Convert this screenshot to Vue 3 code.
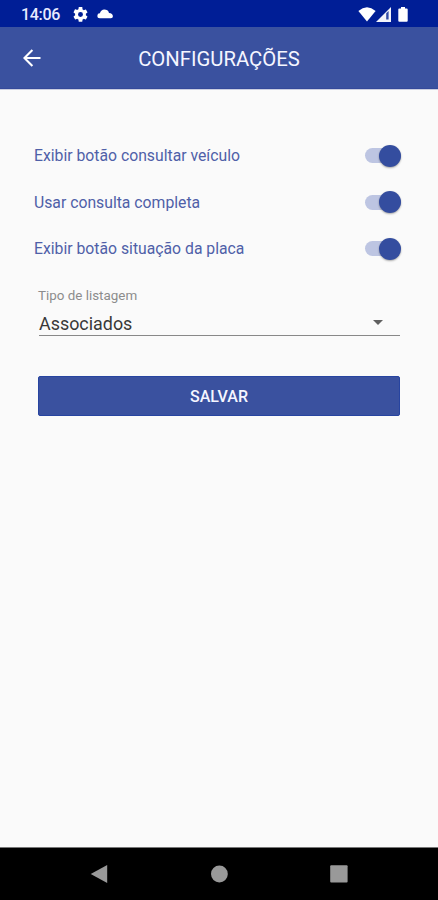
<script setup>
import { ref } from 'vue'

const options = ref([
  { label: 'Exibir botão consultar veículo', on: true },
  { label: 'Usar consulta completa', on: true },
  { label: 'Exibir botão situação da placa', on: true },
])
</script>

<template>
  <div class="screen">
    <div class="status">
      <span class="clock">14:06</span>
      <svg class="gear" viewBox="2 2 20 20"><path d="M19.14 12.94c.04-.3.06-.61.06-.94 0-.32-.02-.64-.07-.94l2.03-1.58a.49.49 0 0 0 .12-.61l-1.92-3.32a.49.49 0 0 0-.59-.22l-2.39.96a7 7 0 0 0-1.62-.94l-.36-2.54A.48.48 0 0 0 13.92 2h-3.84c-.24 0-.43.17-.47.41l-.36 2.54c-.59.24-1.13.57-1.62.94l-2.39-.96a.48.48 0 0 0-.59.22L2.74 8.87a.48.48 0 0 0 .12.61l2.03 1.58c-.05.3-.09.63-.09.94s.02.64.07.94l-2.03 1.58a.49.49 0 0 0-.12.61l1.92 3.32c.12.22.37.29.59.22l2.39-.96c.5.38 1.03.7 1.62.94l.36 2.54c.05.24.24.41.48.41h3.84c.24 0 .44-.17.47-.41l.36-2.54a6.8 6.8 0 0 0 1.62-.94l2.39.96c.22.08.47 0 .59-.22l1.92-3.32a.48.48 0 0 0-.12-.61zM12 15.3a3.3 3.3 0 1 1 0-6.6 3.3 3.3 0 0 1 0 6.6z" /></svg>
      <svg class="cloud" viewBox="0 0 16 10"><path d="M2.8 9.2A2.5 2.5 0 0 1 2.9 4.2Q4.2 .6 7.2 .6q3.8 0 4.8 3.3 3.8.4 3.9 3.3 0 2-2 2z" /></svg>
      <span class="spacer"></span>
      <svg class="wifi" viewBox="0 0 18 15"><path d="M.4 4Q9-3.4 17.6 4L9 14.6z" /></svg>
      <svg class="signal" viewBox="0 0 15 15"><path d="M0 15L15 0v15z" opacity=".95" /><path class="cut" d="M10.2 6.2L12.6 4v8.5h-2.4z" /></svg>
      <svg class="battery" viewBox="0 0 10 15"><path d="M3 0h4v1.6h1.7q1 0 1 1v11.2q0 1-1 1H1.3q-1 0-1-1V2.6q0-1 1-1H3z" /></svg>
    </div>
    <header class="bar">
      <svg class="back" viewBox="0 0 18 18"><path d="M17.5 9H1.5M9.4 1L1.4 9l8 8" /></svg>
      <h1>CONFIGURAÇÕES</h1>
    </header>
    <main>
      <label v-for="(option, i) in options" :key="i" class="option">
        <span class="text">{{ option.label }}</span>
        <input v-model="option.on" type="checkbox" />
        <span class="switch"><span class="thumb"></span></span>
      </label>
      <div class="field">
        <span class="caption">Tipo de listagem</span>
        <div class="select">
          <span class="value">Associados</span>
          <svg viewBox="0 0 10 5"><path d="M0 0h10L5 5z" /></svg>
        </div>
      </div>
      <button>SALVAR</button>
    </main>
    <nav>
      <svg viewBox="0 0 18 18"><path d="M.7 9L17.2 0v18z" /></svg>
      <svg viewBox="0 0 18 18"><circle cx="9.4" cy="9" r="8.4" /></svg>
      <svg viewBox="0 0 18 18"><rect x=".2" y=".2" width="17.4" height="17.4" rx="1" /></svg>
    </nav>
  </div>
</template>

<style>
body { margin: 0; }
</style>

<style scoped>
.screen {
  display: flex;
  flex-direction: column;
  width: 438px;
  height: 900px;
  overflow: hidden;
  background: #fafafa;
  font-family: Roboto, "Liberation Sans", sans-serif;
}
svg { display: block; flex: none; }
.status {
  display: flex;
  align-items: center;
  box-sizing: border-box;
  height: 27px;
  padding: 1px 30px 0 21px;
  background: #001e96;
  fill: #fff;
}
.clock { width: 52px; color: #e8ebff; font-size: 16px; font-weight: 500; line-height: 27px; letter-spacing: -.3px; }
.gear { width: 15px; height: 15px; }
.cloud { width: 16px; height: 10px; margin-left: 9px; }
.spacer { flex: 1; }
.wifi { width: 18px; height: 15px; }
.signal { width: 15px; height: 15px; }
.cut { fill: #304aa6; }
.battery { width: 10px; height: 15px; margin-left: 7px; }
.bar {
  display: grid;
  grid-template-columns: 42px 1fr 42px;
  align-items: center;
  box-sizing: border-box;
  height: 62px;
  padding-top: 1px;
  background: #3a519f;
  border-bottom: 1px solid #34499a;
  box-shadow: 0 1px 0 #c9cde0;
}
.back { width: 18px; height: 18px; margin-left: 23px; fill: none; stroke: #fff; stroke-width: 2.1; }
h1 { margin: 1px 0 0; color: #f5f6ff; font-size: 20.3px; font-weight: 400; line-height: 26px; text-align: center; }
main { flex: 1; padding: 43.4px 38px 0; }
.option { display: flex; align-items: center; justify-content: space-between; height: 46.6px; margin-left: -4px; }
.option input { display: none; }
.text { color: #4f60a8; font-size: 15.75px; line-height: 20px; padding-top: 1px; }
.switch {
  display: flex;
  align-items: center;
  justify-content: flex-end;
  width: 36px;
  height: 15px;
  margin-right: -1px;
  border-radius: 8px;
  background: #bdc5e2;
}
.thumb { width: 22px; height: 22px; flex: none; border-radius: 50%; background: #344d9f; box-shadow: 0 1px 2px #0005; }
.field { padding-top: 15.1px; }
.caption { display: block; height: 17px; color: #8c8c8c; font-size: 13.4px; line-height: 17px; }
.select {
  display: flex;
  align-items: center;
  justify-content: space-between;
  box-sizing: border-box;
  height: 32px;
  margin-left: 1px;
  padding: 6px 17px 0 0;
  border-bottom: 1px solid #888;
  color: #383838;
  font-size: 17.9px;
}
.value { padding-top: 2px; }
.select svg { width: 10px; height: 5px; fill: #606060; }
button {
  display: block;
  box-sizing: border-box;
  width: 362px;
  height: 40px;
  margin: 40px 0 0;
  padding: 1px 0 0;
  border: 1px solid #2744a0;
  border-radius: 2px;
  background: #3a519f;
  color: #f5f6ff;
  font: 500 16px Roboto, "Liberation Sans", sans-serif;
}
nav {
  display: flex;
  align-items: center;
  justify-content: space-between;
  box-sizing: border-box;
  height: 53px;
  padding: 0 90px;
  border-top: 1px solid #777;
  background: #000;
  fill: #999;
}
nav svg { width: 18px; height: 18px; }
</style>
